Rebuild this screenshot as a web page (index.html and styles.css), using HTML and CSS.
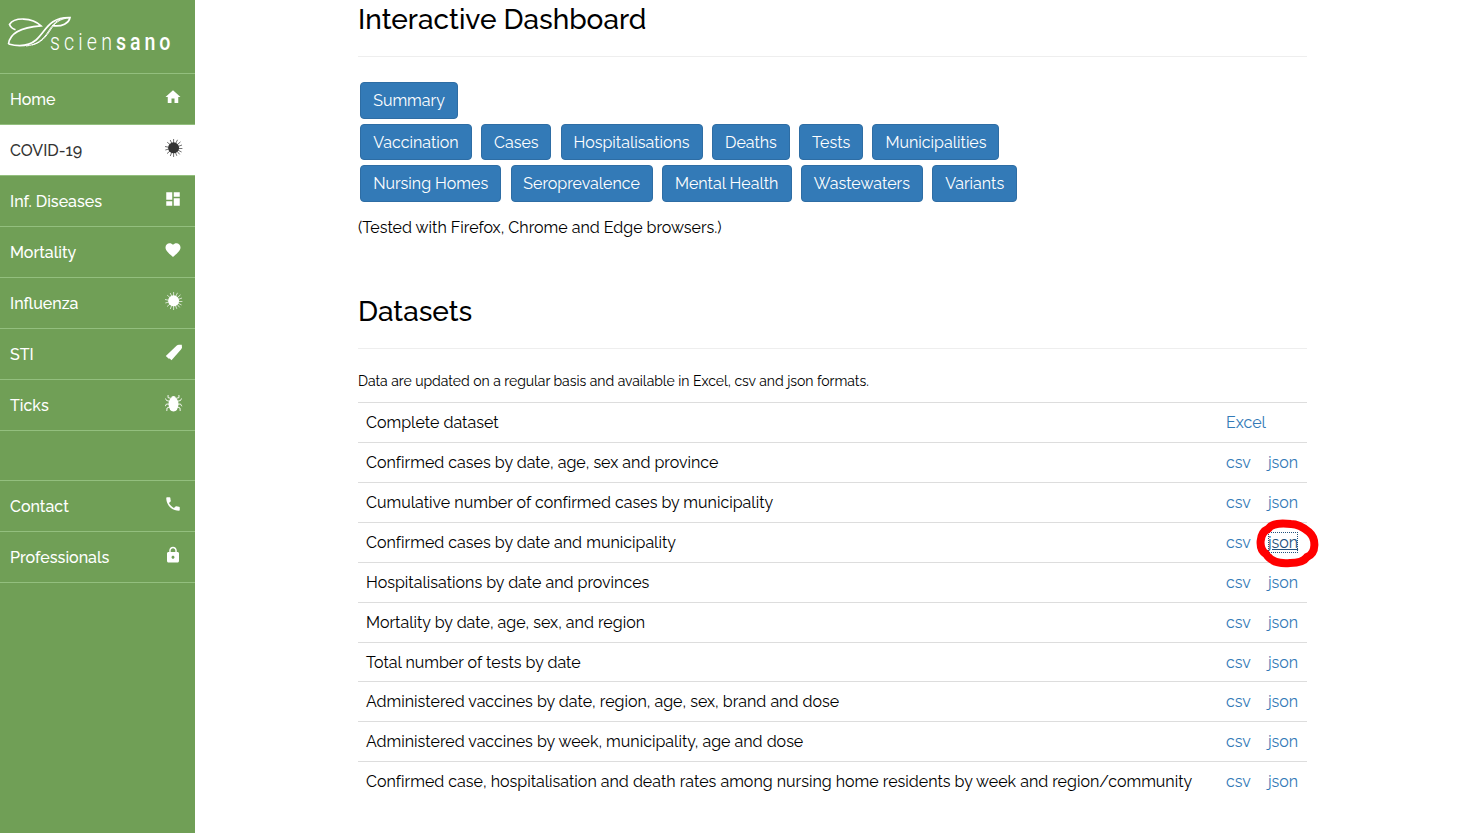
FILE: index.html
```html
<!DOCTYPE html>
<html lang="en">
<head>
<meta charset="utf-8">
<title>Sciensano - COVID-19</title>
<link rel="stylesheet" href="styles.css">
</head>
<body>
<svg class="defs" width="0" height="0" aria-hidden="true">
  <symbol id="virus" viewBox="0 0 18 18">
    <circle cx="8.6" cy="8.8" r="5.5" fill="currentColor"/>
    <path d="M8.6 0v18M0 7.500l3.500.7M.3 11l3.500-1M2.200 3.200l3 2.500M5.200 1l1.600 3.400M12.500.8l-1.800 3.600M15.500 2.800 12.500 5.500M17 6l-3.500 1.300M17.400 9.500h-4M16.600 13l-3.500-1.800M2 14.600l3-2.600M5.300 17l1.300-3.400M11.800 16.800l-1.300-3.200M14.700 15.400l-2.500-3" stroke="currentColor" stroke-width=".7" fill="none"/>
  </symbol>
</svg>
<div class="page">
  <nav class="sidebar">
    <a class="brand">
      <svg class="leaf" viewBox="0 0 66 34" fill="none" stroke="#fff">
        <path d="M1.500 29C2.500 20 10 12.500 34 10.800C25 2 7 2 2.500 9.500C3.500 12 6 14 8.500 14.800" stroke-width="1.700"/>
        <path d="M1.500 29C13 32 22 31 29 25C39 16 42 2 63 2.500C62 8 55 12 46 10.700" stroke-width="1.700"/>
        <path d="M19 31C29 30 36 25 41 17C46 9 50 4 59 2.500M25 30C34 28 39 22 44 14C48 8 52 4 63 2.500" stroke-width="1"/>
      </svg>
      <span class="wordmark"><span>scien</span><b>sano</b></span>
    </a>
    <a class="item"><span>Home</span><svg viewBox="0 0 24 24"><path d="M10 20v-6h4v6h5v-8h3L12 3 2 12h3v8z"/></svg></a>
    <a class="item active"><span>COVID-19</span><svg class="bug"><use href="#virus"/></svg></a>
    <a class="item"><span>Inf. Diseases</span><svg viewBox="0 0 24 24"><path d="M3 13h8V3H3v10zm0 8h8v-6H3v6zm10 0h8V11h-8v10zm0-18v6h8V3h-8z"/></svg></a>
    <a class="item"><span>Mortality</span><svg viewBox="0 0 24 24"><path d="M12 21.35l-1.45-1.32C5.4 15.36 2 12.28 2 8.5 2 5.42 4.42 3 7.5 3c1.74 0 3.41.81 4.5 2.09C13.09 3.81 14.76 3 16.5 3 19.58 3 22 5.42 22 8.5c0 3.78-3.4 6.86-8.55 11.54L12 21.35z"/></svg></a>
    <a class="item"><span>Influenza</span><svg class="bug"><use href="#virus"/></svg></a>
    <a class="item"><span>STI</span><svg class="bug" viewBox="0 0 18 18"><path d="M.8 13 11.500 2.700Q12.500 1.900 14 1.800L16.800 1.800 17 4.800 16.200 6.300 6.500 17.200 4.700 15.400 3.800 15.800z"/></svg></a>
    <a class="item"><span>Ticks</span><svg class="bug" viewBox="0 0 18 18"><path d="M8.500 2Q10.700 2 11 4.200Q13.500 6 13.500 10.300Q13.100 17.200 8.500 17.600Q3.900 17.200 3.500 10.300Q3.500 6 6 4.200Q6.300 2 8.500 2z"/><path fill="none" stroke="currentColor" stroke-width=".9" d="M6 4.400 3 3.600 3.100 1M11 4.400l3-.8L13.900 1M4.300 7.200 1.500 6.500.5 4.500M12.700 7.200l2.800-.7 1-2M4 10.200 1.500 10 .2 12.300M13 10.200l2.500-.2 1.300 2.300M4.500 13 2 14l-.2 3M12.500 13l2.500 1 .2 3"/></svg></a>
    <div class="gap"></div>
    <a class="item"><span>Contact</span><svg viewBox="0 0 24 24"><path d="M6.62 10.79c1.44 2.83 3.76 5.14 6.59 6.59l2.2-2.2c.27-.27.67-.36 1.02-.24 1.12.37 2.33.57 3.57.57.55 0 1 .45 1 1V20c0 .55-.45 1-1 1-9.39 0-17-7.61-17-17 0-.55.45-1 1-1h3.5c.55 0 1 .45 1 1 0 1.25.2 2.45.57 3.57.11.35.03.74-.25 1.02l-2.2 2.2z"/></svg></a>
    <a class="item"><span>Professionals</span><svg viewBox="0 0 24 24"><path d="M18 8h-1V6c0-2.76-2.24-5-5-5S7 3.24 7 6v2H6c-1.1 0-2 .9-2 2v10c0 1.1.9 2 2 2h12c1.1 0 2-.9 2-2V10c0-1.1-.9-2-2-2zm-6 9c-1.1 0-2-.9-2-2s.9-2 2-2 2 .9 2 2-.9 2-2 2zm3.1-9H8.9V6c0-1.71 1.39-3.1 3.1-3.1 1.71 0 3.1 1.39 3.1 3.1v2z"/></svg></a>
  </nav>
  <main class="content">
    <h2>Interactive Dashboard</h2>
    <div class="buttons">
      <div class="row"><a class="btn b-sum">Summary</a></div>
      <div class="row second"><a class="btn b-vac">Vaccination</a><a class="btn b-cas">Cases</a><a class="btn b-hos">Hospitalisations</a><a class="btn b-dea">Deaths</a><a class="btn b-tes">Tests</a><a class="btn b-mun">Municipalities</a></div>
      <div class="row"><a class="btn b-nur">Nursing Homes</a><a class="btn b-ser">Seroprevalence</a><a class="btn b-men">Mental Health</a><a class="btn b-was">Wastewaters</a><a class="btn b-var">Variants</a></div>
    </div>
    <p class="tested">(Tested with Firefox, Chrome and Edge browsers.)</p>
    <h2 class="datasets">Datasets</h2>
    <p class="intro">Data are updated on a regular basis and available in Excel, csv and json formats.</p>
    <div class="table">
      <div class="line"><span>Complete dataset</span><span class="links"><a>Excel</a></span></div>
      <div class="line"><span>Confirmed cases by date, age, sex and province</span><span class="links"><a>csv</a><a>json</a></span></div>
      <div class="line"><span>Cumulative number of confirmed cases by municipality</span><span class="links"><a>csv</a><a>json</a></span></div>
      <div class="line"><span>Confirmed cases by date and municipality</span><span class="links"><a>csv</a><a class="focused">json<svg class="ring" viewBox="0 0 64 50"><path d="M36 5C26 4 17 4 13 10C4 14 3 30 11 35C16 43 24 45 35 44C46 44 50 41 52 38C62 34 61 19 54 13C48 8 42 5 36 5z"/></svg></a></span></div>
      <div class="line"><span>Hospitalisations by date and provinces</span><span class="links"><a>csv</a><a>json</a></span></div>
      <div class="line"><span>Mortality by date, age, sex, and region</span><span class="links"><a>csv</a><a>json</a></span></div>
      <div class="line short"><span>Total number of tests by date</span><span class="links"><a>csv</a><a>json</a></span></div>
      <div class="line"><span>Administered vaccines by date, region, age, sex, brand and dose</span><span class="links"><a>csv</a><a>json</a></span></div>
      <div class="line"><span>Administered vaccines by week, municipality, age and dose</span><span class="links"><a>csv</a><a>json</a></span></div>
      <div class="line"><span>Confirmed case, hospitalisation and death rates among nursing home residents by week and region/community</span><span class="links"><a>csv</a><a>json</a></span></div>
    </div>
  </main>
</div>
</body>
</html>
```
FILE: styles.css
```css
* { box-sizing: border-box; }
body { margin: 0; height: 833px; overflow: hidden; background: #fff; color: #000; font: 16px/22.857px Raleway, Lato, sans-serif; }
.defs { display: block; height: 0; }
.page { display: flex; height: 833px; }
.sidebar { width: 195px; flex: none; background: #709f56; color: #fff; }
.brand { display: flex; height: 74px; border-bottom: 1px solid #93bf7e; padding: 15px 0 0 7px; }
.leaf { width: 66px; height: 34px; flex: none; }
.wordmark { margin: 13px 0 0 -23px; font: 300 24px/28px Roboto, sans-serif; letter-spacing: 5.1px; white-space: nowrap; transform: scaleX(.815); transform-origin: 0 0; }
.wordmark b { font-weight: 500; letter-spacing: 4.8px; }
.item { display: flex; justify-content: space-between; height: 51px; padding: 14px 13px 0 10px; border-bottom: 1px solid #93bf7e; font-weight: 500; white-space: nowrap; }
.item span { padding-top: 1px; }
.item svg { width: 18px; height: 18px; fill: currentColor; }
.item svg.bug { margin-right: -1px; }
.active { background: #fff; color: #333; }
.gap { height: 50px; border-bottom: 1px solid #93bf7e; }
.content { width: 949px; margin-left: 163px; white-space: nowrap; }
h2 { margin: 0; height: 57px; border-bottom: 1px solid #eee; font-size: 28px; line-height: 40px; font-weight: 500; }
.buttons { display: flex; flex-direction: column; gap: 4.6px; padding: 25.2px 0 0 2px; }
.row { display: flex; gap: 9.3px; }
.btn { height: 36.8px; border: 1px solid #2e6da4; border-radius: 4px; background: #337ab7; color: #fff; padding: 6.8px 0 0; text-align: center; }
.second .btn { padding-top: 7.4px; }
.b-sum { width: 98px; } .b-vac { width: 112px; } .b-cas { width: 70px; } .b-hos { width: 142px; }
.b-dea { width: 78px; } .b-tes { width: 64px; } .b-mun { width: 127px; } .b-nur { width: 141.3px; }
.b-ser { width: 142px; } .b-men { width: 129.7px; } .b-was { width: 122px; } .b-var { width: 85px; }
.tested { margin: 15px 0 0; height: 22px; }
.datasets { margin-top: 52.8px; }
.intro { margin: 21px 0 10.4px; height: 22px; line-height: 22px; font-size: 14px; letter-spacing: -.035px; }
.line { display: flex; justify-content: space-between; height: 40px; padding: 9px 8px 0; border-top: 1px solid #ddd; letter-spacing: .007px; }
.line.short { height: 39px; }
.links { display: flex; gap: 17px; width: 73px; color: #337ab7; }
.links .focused { position: relative; height: 21px; color: #23527c; text-decoration: underline; outline: 1px dotted #23527c; outline-offset: -1px; }
.ring { position: absolute; left: -13px; top: -13px; width: 64px; height: 50px; fill: none; stroke: #f00; stroke-width: 8; stroke-linejoin: round; }
```
